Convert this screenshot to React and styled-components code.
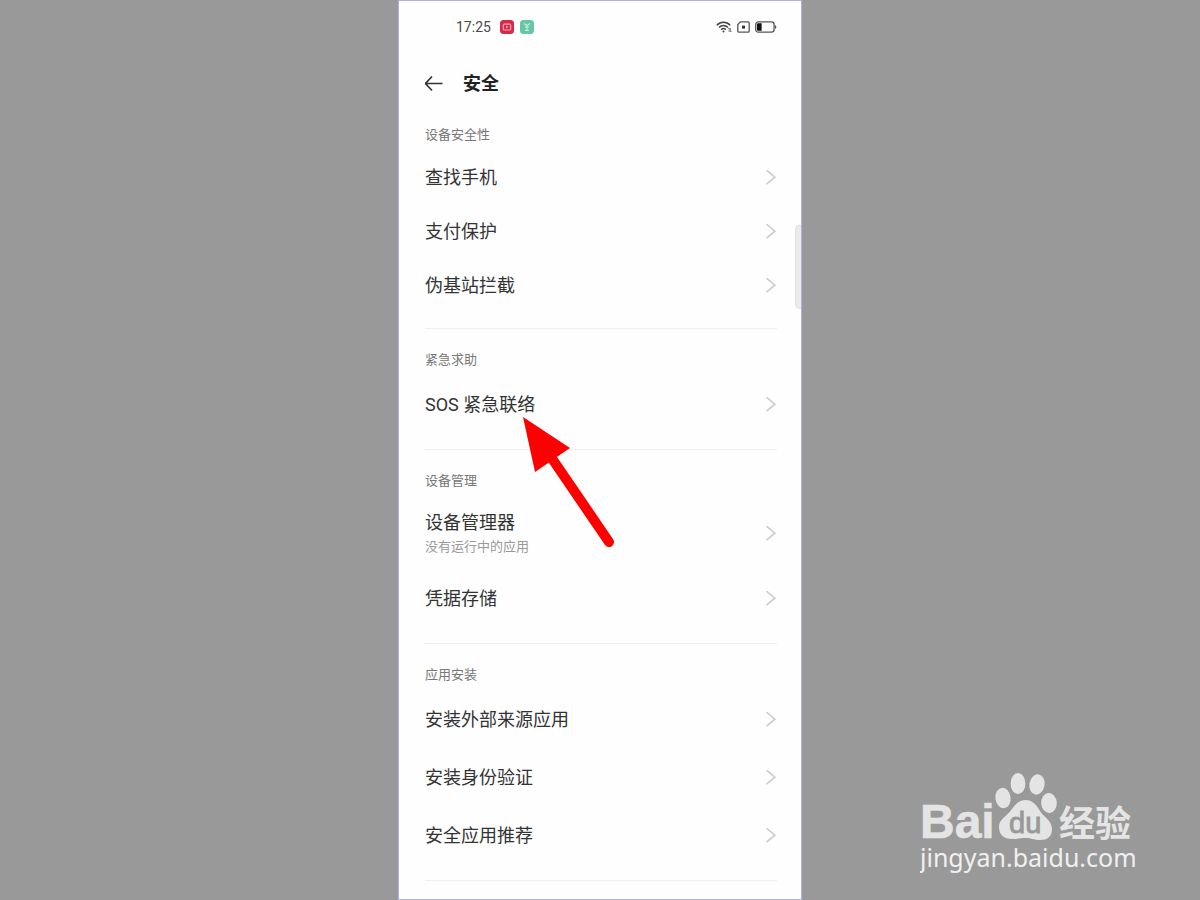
import styled, { createGlobalStyle } from 'styled-components';

const GlobalStyle = createGlobalStyle`
  * {
    box-sizing: border-box;
  }

  body {
    margin: 0;
    background: #999999;
    font-family: Roboto, "Noto Sans CJK SC", sans-serif;
  }
`;

const Page = styled.div`
  position: relative;
  min-height: 100vh;
  display: flex;
  justify-content: center;
`;

const Phone = styled.main`
  position: relative;
  width: 100%;
  max-width: 404px;
  padding: 0 24px 0 26px;
  background: #fefefe;
  border: 1px solid #b0b0e6;
`;

const StatusBar = styled.div`
  display: flex;
  align-items: center;
  justify-content: space-between;
  height: 52px;
  padding-left: 31px;
`;

const StatusGroup = styled.div`
  display: flex;
  align-items: center;
  gap: ${props => props.gap};
`;

const Clock = styled.time`
  margin-right: 3px;
  font-size: 14px;
  color: #4a4a4a;
`;

const Header = styled.header`
  display: flex;
  align-items: center;
  gap: 18px;
  height: 62px;
`;

const BackButton = styled.button`
  display: flex;
  padding: 0;
  border: 0;
  background: none;
  cursor: pointer;
`;

const Title = styled.h1`
  margin: 0;
  font-size: 18px;
  line-height: 24px;
  font-weight: 700;
  color: #222222;
`;

const Section = styled.section`
  padding: ${props => props.first ? '10px' : '21px'} 0 15px;
  border-bottom: 1px solid #efefef;
`;

const SectionTitle = styled.h2`
  margin: 0 0 6px;
  font-size: 13px;
  line-height: 20px;
  font-weight: 400;
  color: #777777;
`;

const List = styled.ul`
  margin: 0;
  padding: 0;
  list-style: none;
`;

const Item = styled.li`
  position: relative;
`;

const RowLink = styled.a`
  display: flex;
  align-items: center;
  justify-content: space-between;
  min-height: ${props => props.height};
  color: #333333;
  text-decoration: none;
`;

const RowText = styled.span`
  display: flex;
  flex-direction: column;
`;

const RowTitle = styled.span`
  font-size: 18px;
  line-height: 26px;
`;

const RowNote = styled.span`
  font-size: 13px;
  line-height: 22px;
  color: #999999;
`;

const Pointer = styled.svg`
  position: absolute;
  top: 39px;
  left: 96px;
  z-index: 1;
  pointer-events: none;
`;

const ScrollThumb = styled.div`
  position: absolute;
  top: 224px;
  right: 0;
  width: 6px;
  height: 84px;
  background: #ebebeb;
  border: 1px solid #dfdfdf;
  border-right: 0;
  border-radius: 5px 0 0 5px;
`;

const Watermark = styled.div`
  position: absolute;
  right: 60px;
  bottom: 16px;
`;

const sections = [
  { title: '设备安全性', height: '54px', rows: [{ title: '查找手机' }, { title: '支付保护' }, { title: '伪基站拦截' }] },
  { title: '紧急求助', height: '58px', rows: [{ title: 'SOS 紧急联络', pointed: true }] },
  { title: '设备管理', height: '58px', rows: [{ title: '设备管理器', note: '没有运行中的应用' }, { title: '凭据存储' }] },
  { title: '应用安装', height: '58px', rows: [{ title: '安装外部来源应用' }, { title: '安装身份验证' }, { title: '安全应用推荐' }] },
];

function Chevron() {
  return (
    <svg width="12" height="16" viewBox="0 0 12 16" fill="none" stroke="#cdcdcd" strokeWidth="1.7" aria-hidden="true">
      <path d="M1.5 .2L9.8 7.2L1.5 14.2" />
    </svg>
  );
}

function RecordIcon() {
  return (
    <svg width="14" height="14" viewBox="0 0 14 14" aria-hidden="true">
      <rect width="14" height="14" rx="3.5" fill="#d52b49" />
      <rect x="3.3" y="4.2" width="7.4" height="5.8" rx="1" fill="none" stroke="#ff9dab" strokeWidth="1.2" />
      <path d="M6 5.6L8.5 7.1L6 8.6Z" fill="#ff9dab" />
    </svg>
  );
}

function AppIcon() {
  return (
    <svg width="14" height="14" viewBox="0 0 14 14" aria-hidden="true">
      <rect width="14" height="14" rx="3.5" fill="#66c7a4" />
      <path d="M4 3.5L6 5H8L10 3.5M5 7H9M7 5V10.5M5 10.5H9" fill="none" stroke="#c9f0e1" strokeWidth="1.1" />
    </svg>
  );
}

function WifiIcon() {
  return (
    <svg width="16" height="12" viewBox="0 0 16 12" fill="none" stroke="#444444" strokeWidth="1.5" aria-hidden="true">
      <path d="M.8 4.2C4.6.2 10.4.2 14.2 4.2" />
      <path d="M3 6.5C5.6 3.9 9.4 3.9 12 6.5" />
      <path d="M5.2 8.7C6.6 7.3 8.4 7.3 9.8 8.7" />
      <circle cx="7.5" cy="10.6" r="1" fill="#444444" stroke="none" />
      <path d="M12.2 8.2L13.2 7V11M14.6 7V11L15.4 10" strokeWidth=".9" stroke="#777777" />
    </svg>
  );
}

function SimIcon() {
  return (
    <svg width="13" height="12" viewBox="0 0 13 12" fill="none" stroke="#555555" strokeWidth="1.3" aria-hidden="true">
      <path d="M3.5 .8H11C11.8.8 12.2 1.2 12.2 2V10C12.2 10.8 11.8 11.2 11 11.2H2C1.2 11.2.8 10.8.8 10V3.5Z" />
      <rect x="5" y="4.6" width="3" height="3" fill="#333333" stroke="none" />
    </svg>
  );
}

function BatteryIcon() {
  return (
    <svg width="22" height="12" viewBox="0 0 22 12" aria-hidden="true">
      <rect x=".7" y=".9" width="18.4" height="10.2" rx="2.6" fill="none" stroke="#555555" strokeWidth="1.3" />
      <path d="M3.3 2.2H6.6V9.8H3.3C2.5 9.8 2 9.3 2 8.5V3.5C2 2.7 2.5 2.2 3.3 2.2Z" fill="#111111" />
      <path d="M20 4C21.8 4.6 21.8 7.4 20 8Z" fill="#555555" />
    </svg>
  );
}

function BackIcon() {
  return (
    <svg width="20" height="16" viewBox="2 .5 20 16" fill="none" stroke="#333333" strokeWidth="1.6" aria-hidden="true">
      <path d="M9 1L2.5 8L9 15M2.5 8H19.5" />
    </svg>
  );
}

function RedPointer() {
  return (
    <Pointer width="96" height="136" viewBox="0 0 96 136" aria-hidden="true">
      <path d="M2 2L49 33L14 57Z" fill="#ff0000" />
      <path d="M30 42L88 127" stroke="#ff0000" strokeWidth="10" strokeLinecap="round" />
    </Pointer>
  );
}

function BaiduLogo() {
  return (
    <svg width="220" height="110" viewBox="0 0 220 110" fill="#e4e4e4" role="img" aria-label="Baidu 经验">
      <text x="0" y="68" fontFamily="Liberation Sans, sans-serif" fontWeight="700" fontSize="48" stroke="#e4e4e4" strokeWidth=".6">Bai</text>
      <ellipse cx="83" cy="28" rx="7.6" ry="10.2" transform="rotate(-8 83 28)" />
      <ellipse cx="98" cy="13.5" rx="7.4" ry="10.5" />
      <ellipse cx="117" cy="14.5" rx="7.6" ry="10.2" transform="rotate(10 117 14.5)" />
      <ellipse cx="129" cy="33" rx="7.8" ry="10" transform="rotate(-5 129 33)" />
      <path d="M106 30C112 30 116 34 120 41C124 47 132 51 132 59C132 67 127 70 120 70C114 70 111 68 106 68C101 68 98 69 92 69C84 69 79 65 79 57C79 49 87 46 92 39C96 33 100 30 106 30Z" />
      <text x="89" y="63" fontFamily="Liberation Sans, sans-serif" fontSize="29" fill="#999999" stroke="#999999" strokeWidth=".9">du</text>
      <text x="139" y="67" fontFamily="Noto Sans CJK SC, sans-serif" fontWeight="700" fontSize="36">经验</text>
      <text x="0" y="97" fontFamily="Noto Sans, sans-serif" fontSize="25" fill="#f0f0f0">jingyan.baidu.com</text>
    </svg>
  );
}

function App() {
  return (
    <>
      <GlobalStyle />
      <Page>
        <Phone>
          <StatusBar>
            <StatusGroup gap="6px">
              <Clock>17:25</Clock>
              <RecordIcon />
              <AppIcon />
            </StatusGroup>
            <StatusGroup gap="5px">
              <WifiIcon />
              <SimIcon />
              <BatteryIcon />
            </StatusGroup>
          </StatusBar>
          <Header>
            <BackButton type="button" aria-label="返回">
              <BackIcon />
            </BackButton>
            <Title>安全</Title>
          </Header>
          {sections.map(({ title, height, rows }, index) => (
            <Section key={title} first={index === 0}>
              <SectionTitle>{title}</SectionTitle>
              <List>
                {rows.map(row => (
                  <Item key={row.title}>
                    <RowLink href="#" height={row.note ? '73px' : height}>
                      <RowText>
                        <RowTitle>{row.title}</RowTitle>
                        {row.note && <RowNote>{row.note}</RowNote>}
                      </RowText>
                      <Chevron />
                    </RowLink>
                    {row.pointed && <RedPointer />}
                  </Item>
                ))}
              </List>
            </Section>
          ))}
          <ScrollThumb />
        </Phone>
        <Watermark>
          <BaiduLogo />
        </Watermark>
      </Page>
    </>
  );
}

export default App;
